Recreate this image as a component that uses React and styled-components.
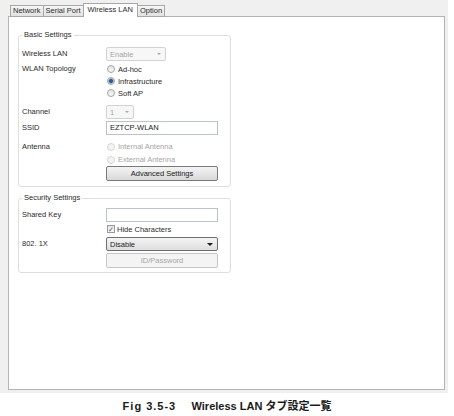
import React from "react";
import styled, { createGlobalStyle } from "styled-components";

const GlobalStyle = createGlobalStyle`
  body {
    margin: 0;
    background: #ffffff;
    font-family: "Liberation Sans", Arial, sans-serif;
  }
`;

const Frame = styled.div`
  width: 448px;
  background: #f0f0f0;
  padding: 3px 3px 3px 8px;
  box-sizing: border-box;
`;

const TabStrip = styled.div`
  display: flex;
  align-items: flex-end;
  height: 14px;
  padding-left: 3px;
  margin-bottom: -1px;
  position: relative;
  z-index: 1;
`;

const Tab = styled.div`
  height: ${({ active }) => (active ? "13px" : "10px")};
  margin-left: -1px;
  padding: 0 ${({ active }) => (active ? "4px" : "2px")};
  border: 1px solid #a7a7a7;
  border-bottom: ${({ active }) => (active ? "none" : "1px solid #a7a7a7")};
  background: ${({ active }) =>
    active ? "#ffffff" : "linear-gradient(#f6f6f6, #e2e2e2)"};
  font-size: 7.5px;
  line-height: ${({ active }) => (active ? "12px" : "10px")};
  color: #2a2a2a;
  white-space: nowrap;
`;

const Panel = styled.div`
  height: 374px;
  box-sizing: border-box;
  border: 1px solid #b4b4b4;
  background: #ffffff;
  padding: 13px 0 0 9px;
`;

const Group = styled.fieldset`
  width: 213px;
  box-sizing: border-box;
  margin: ${({ top }) => top || 0}px 0 0 0;
  padding: 0 3px ${({ bottom }) => bottom || 5}px 3px;
  border: 1px solid #dedede;
  border-radius: 3px;
`;

const Legend = styled.legend`
  padding: 0 2px;
  font-size: 7.5px;
  line-height: 10px;
  color: #2a2a2a;
`;

const Row = styled.div`
  display: flex;
  align-items: flex-start;
  margin-top: ${({ gap }) => gap || 0}px;
`;

const Label = styled.div`
  width: 84px;
  flex: none;
  font-size: 7.5px;
  line-height: ${({ lh }) => lh || 14}px;
  color: #2a2a2a;
  white-space: nowrap;
`;

const Controls = styled.div`
  display: flex;
  flex-direction: column;
`;

const Select = styled.div`
  width: ${({ w }) => w}px;
  height: 14px;
  box-sizing: border-box;
  display: flex;
  align-items: center;
  justify-content: space-between;
  padding: 0 4px 0 3px;
  border: 1px solid ${({ disabled }) => (disabled ? "#d2d2d2" : "#6f6f6f")};
  border-radius: 2px;
  background: ${({ disabled }) =>
    disabled ? "#f7f7f7" : "linear-gradient(#f4f4f4, #dedede)"};
  font-size: 7.5px;
  color: ${({ disabled }) => (disabled ? "#a6a6a6" : "#1a1a1a")};
`;

const Arrow = styled.span`
  width: 0;
  height: 0;
  border-left: ${({ big }) => (big ? 3 : 2)}px solid transparent;
  border-right: ${({ big }) => (big ? 3 : 2)}px solid transparent;
  border-top: ${({ big }) => (big ? 3 : 2)}px solid
    ${({ big }) => (big ? "#1a1a1a" : "#a8a8a8")};
`;

const TextBox = styled.div`
  width: 112px;
  height: 14px;
  box-sizing: border-box;
  border: 1px solid #b9c3c9;
  background: #ffffff;
  padding-left: 3px;
  font-size: 7.5px;
  line-height: 12px;
  color: #1a1a1a;
`;

const Option = styled.div`
  display: flex;
  align-items: center;
  height: ${({ h }) => h || 12}px;
  font-size: 7.5px;
  color: ${({ disabled }) => (disabled ? "#a6a6a6" : "#2a2a2a")};
  white-space: nowrap;
`;

const Radio = styled.span`
  width: 8px;
  height: 8px;
  box-sizing: border-box;
  margin: 0 3px 0 1px;
  border-radius: 50%;
  border: 1px solid ${({ disabled }) => (disabled ? "#d6d6d6" : "#a2a2a2")};
  background: ${({ checked, disabled }) =>
    checked
      ? "radial-gradient(circle, #2b5f94 0 1.6px, #9bb7d4 2.4px, #e8e8e8 3px)"
      : disabled
      ? "#f4f4f4"
      : "linear-gradient(#e6e6e6, #f8f8f8)"};
`;

const Check = styled.span`
  width: 8px;
  height: 8px;
  box-sizing: border-box;
  margin: 0 2px 0 1px;
  border: 1px solid #9a9a9a;
  background: linear-gradient(#e4e4e4, #f8f8f8);
  display: flex;
  align-items: center;
  justify-content: center;
  font-size: 7px;
  line-height: 7px;
  color: #3c5a86;
`;

const Button = styled.div`
  width: 112px;
  height: 15px;
  box-sizing: border-box;
  border: 1px solid ${({ disabled }) => (disabled ? "#c4c6c8" : "#7a7a7a")};
  border-radius: 2px;
  background: ${({ disabled }) =>
    disabled ? "#f4f4f4" : "linear-gradient(#f3f3f3, #e6e6e6 50%, #d8d8d8)"};
  font-size: 7.5px;
  line-height: 13px;
  text-align: center;
  color: ${({ disabled }) => (disabled ? "#a6a6a6" : "#1a1a1a")};
`;

const Caption = styled.div`
  margin-top: 6px;
  text-align: center;
  font-family: "Liberation Sans", Arial, "Noto Sans CJK JP", sans-serif;
  font-weight: bold;
  font-size: 11px;
  line-height: 14px;
  color: #1a1a1a;
  white-space: pre;
`;

const Fig = styled.span`
  letter-spacing: 1px;
`;

export default function App() {
  return (
    <>
      <GlobalStyle />
      <Frame>
        <TabStrip>
          <Tab>Network</Tab>
          <Tab>Serial Port</Tab>
          <Tab active>Wireless LAN</Tab>
          <Tab>Option</Tab>
        </TabStrip>
        <Panel>
          <Group>
            <Legend>Basic Settings</Legend>
            <Row gap={7}>
              <Label>Wireless LAN</Label>
              <Select w={60} disabled>
                Enable
                <Arrow />
              </Select>
            </Row>
            <Row gap={2}>
              <Label lh={12}>WLAN Topology</Label>
              <Controls>
                <Option>
                  <Radio />
                  Ad-hoc
                </Option>
                <Option>
                  <Radio checked />
                  Infrastructure
                </Option>
                <Option>
                  <Radio />
                  Soft AP
                </Option>
              </Controls>
            </Row>
            <Row gap={6}>
              <Label>Channel</Label>
              <Select w={28} disabled>
                1
                <Arrow />
              </Select>
            </Row>
            <Row gap={2}>
              <Label>SSID</Label>
              <TextBox>EZTCP-WLAN</TextBox>
            </Row>
            <Row gap={5}>
              <Label lh={13}>Antenna</Label>
              <Controls>
                <Option h={13} disabled>
                  <Radio disabled />
                  Internal Antenna
                </Option>
                <Option h={13} disabled>
                  <Radio disabled />
                  External Antenna
                </Option>
                <Button>Advanced Settings</Button>
              </Controls>
            </Row>
          </Group>
          <Group top={6} bottom={4}>
            <Legend>Security Settings</Legend>
            <Row gap={5}>
              <Label>Shared Key</Label>
              <TextBox />
            </Row>
            <Row gap={1}>
              <Label />
              <Option>
                <Check>✓</Check>
                Hide Characters
              </Option>
            </Row>
            <Row gap={2}>
              <Label>802. 1X</Label>
              <Select w={112}>
                Disable
                <Arrow big />
              </Select>
            </Row>
            <Row gap={2}>
              <Label />
              <Button disabled>ID/Password</Button>
            </Row>
          </Group>
        </Panel>
      </Frame>
      <Caption>
        <Fig>Fig 3.5-3</Fig>
        {"     Wireless LAN タブ設定一覧"}
      </Caption>
    </>
  );
}
